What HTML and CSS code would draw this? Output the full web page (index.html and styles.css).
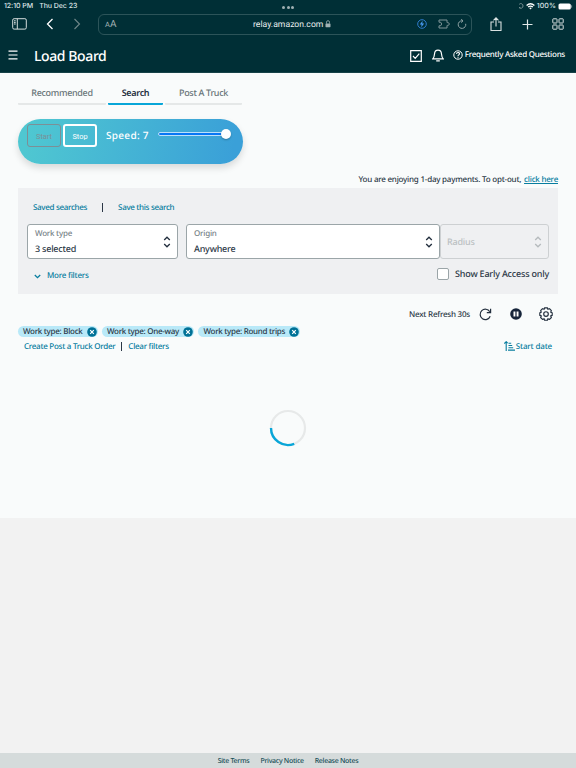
FILE: index.html
```html
<!DOCTYPE html>
<html lang="en">
<head>
<meta charset="utf-8">
<title>Load Board</title>
<link rel="stylesheet" href="styles.css">
</head>
<body>
<header class="top">
  <div class="status">
    <span class="time">12:10 PM</span><span>Thu Dec 23</span>
    <span class="dots"><i></i><i></i><i></i></span>
    <svg class="orient" width="6" height="6" viewBox="0 0 6 6" fill="none" stroke="#8fa3a6" stroke-width=".8"><path d="M1.2 1.3A2.2 2.2 0 0 1 5 3a2.2 2.2 0 0 1-3.7 1.7M1 4.7h1.5"/></svg>
    <svg class="wifi" width="9" height="7" viewBox="0 0 9 7" fill="none" stroke="#fff" stroke-width="1.3"><path d="M.6 2.5Q4.5-.9 8.4 2.5M2.1 4.1q2.4-2 4.8 0"/><path d="M3.2 5 4.5 6.5 5.8 5Q4.5 4.2 3.2 5Z" fill="#fff" stroke="none"/></svg>
    <span class="pct">100%</span>
    <svg width="15" height="7" viewBox="0 0 15 7"><rect x=".5" y=".5" width="12.3" height="6" rx="1.6" fill="#fff"/><path d="M13.6 2.3v2.4" stroke="#a5b5b7" stroke-width=".8"/></svg>
  </div>
  <div class="browser">
    <svg class="side" width="15" height="12" viewBox="0 0 15 12" fill="none" stroke="#d5dddd" stroke-width="1"><rect x=".7" y=".7" width="13.6" height="10.4" rx="1.4"/><path d="M5.3.7v10.4M2 2.8h1.7M2 4.4h1.7M2 6h1.7"/></svg>
    <svg class="back" width="8" height="12" viewBox="0 0 8 12" fill="none" stroke="#fff" stroke-width="1.3"><path d="M6.5 1 1.5 6l5 5"/></svg>
    <svg class="fwd" width="8" height="12" viewBox="0 0 8 12" fill="none" stroke="#6f8789" stroke-width="1.1"><path d="m1.5 1 5 5-5 5"/></svg>
    <div class="address">
      <span class="aa"><small>A</small>A</span>
      <span class="url">relay.amazon.com</span>
      <svg class="lock" width="6" height="8" viewBox="0 0 6 8"><rect x=".5" y="3.4" width="5" height="3.8" rx=".6" fill="#a2b2b4"/><path d="M1.5 3.6V2.2a1.5 1.5 0 0 1 3 0v1.4" fill="none" stroke="#a2b2b4" stroke-width=".8"/></svg>
      <svg class="bolt" width="10" height="10" viewBox="0 0 10 10"><circle cx="5" cy="5" r="4.3" fill="none" stroke="#3484dc" stroke-width=".9"/><path d="M5.6 1.8 2.8 5.4h1.8L4.2 8.2 7.2 4.5H5.3Z" fill="#4a9cf5"/></svg>
      <svg class="puzzle" width="12" height="10" viewBox="0 0 12 10" fill="none" stroke="#7f9597" stroke-width="1" stroke-linejoin="round"><path d="M1 3.200V1h8v2.500c.8.300 2.300 0 2.300 1.500S9.800 6.200 9 6.500V9H1V6.800h1.200c1.800 0 1.800-3.600 0-3.600Z"/></svg>
      <svg class="reload" width="10" height="10" viewBox="0 0 10 10" fill="none" stroke="#8fa3a5" stroke-width="1"><path d="M8.700 4.800A3.800 3.800 0 1 1 5 1.800h1M4.200.2 6 1.800 4.200 3.600"/></svg>
    </div>
    <svg class="share" width="12" height="15" viewBox="0 0 12 15" fill="none" stroke="#d9e1e1" stroke-width="1.1"><path d="M4 5H1v8.500h10V5H8M6 9.500V1M3.500 3.400 6 .9l2.500 2.500"/></svg>
    <svg class="plus" width="11" height="11" viewBox="0 0 11 11" stroke="#e2e8e8" stroke-width="1.200"><path d="M5.500.5v10M.5 5.500h10"/></svg>
    <svg class="tiles" width="12" height="12" viewBox="0 0 12 12" fill="none" stroke="#d9e1e1" stroke-width="1"><rect x=".8" y=".8" width="4.200" height="4.200" rx=".5"/><rect x="7" y=".8" width="4.200" height="4.200" rx=".5"/><rect x=".8" y="7" width="4.200" height="4.200" rx=".5"/><rect x="7" y="7" width="4.200" height="4.200" rx=".5"/></svg>
  </div>
  <div class="appbar">
    <svg width="10" height="10" viewBox="0 0 10 10" stroke="#fff" stroke-width="1.200"><path d="M.5 1.200h9M.5 5h9M.5 8.800h9"/></svg>
    <h1>Load Board</h1>
    <svg class="task" width="12" height="12" viewBox="0 0 12 12" fill="none" stroke="#fff" stroke-width="1.200"><path d="M.7.7h10.600v10.600H.7ZM3 6l2.200 2.300L9.300 3.700"/></svg>
    <svg class="bell" width="12" height="13" viewBox="0 0 12 13" fill="none" stroke="#fff" stroke-width="1.200"><path d="M.7 9.900c1.500-1.100 1.600-2.300 1.800-4.900C2.700 2.300 4 1.200 6 1.200S9.300 2.300 9.500 5c.2 2.600.3 3.800 1.800 4.900ZM4.200 11.900h3.600"/></svg>
    <svg class="help" width="10" height="10" viewBox="0 0 10 10" fill="none" stroke="#fff" stroke-width="1"><circle cx="5" cy="5" r="4.200"/><path d="M3.500 3.900C3.600 1.900 6.500 2 6.500 3.800 6.500 4.900 5 4.800 5 6M5 6.800v1" stroke-width="1.100"/></svg>
    <span class="faq">Frequently Asked Questions</span>
  </div>
</header>
<main>
  <nav class="tabs"><a>Recommended</a><a class="on">Search</a><a>Post A Truck</a></nav>
  <section class="pill">
    <button class="start" disabled>Start</button><button>Stop</button>
    <span class="speed">Speed: 7</span>
    <div class="track"><i></i></div>
  </section>
  <p class="notice">You are enjoying 1-day payments. To opt-out, <a>click here</a></p>
  <section class="panel">
    <div class="saved"><a>Saved searches</a><i class="bar"></i><a>Save this search</a></div>
    <div class="fields">
      <div class="field"><div><label>Work type</label><b>3 selected</b></div>
        <svg width="8" height="12" viewBox="0 0 8 12"><path d="m1.200 4 2.800-2.800L6.800 4M1.200 8 4 10.800 6.800 8"/></svg></div>
      <div class="field origin"><div><label>Origin</label><b>Anywhere</b></div>
        <svg width="8" height="12" viewBox="0 0 8 12"><path d="m1.200 4 2.800-2.800L6.800 4M1.200 8 4 10.800 6.800 8"/></svg></div>
      <div class="field radius"><b>Radius</b>
        <svg width="8" height="12" viewBox="0 0 8 12"><path d="m1.200 4 2.800-2.800L6.800 4M1.200 8 4 10.800 6.800 8"/></svg></div>
    </div>
    <div class="more">
      <svg width="7" height="5" viewBox="0 0 7 5" fill="none" stroke="#077d9f" stroke-width="1.300"><path d="m.8 1 2.700 2.600L6.200 1"/></svg>
      <a>More filters</a><i class="check"></i><span class="early">Show Early Access only</span>
    </div>
  </section>
  <div class="refresh">
    <span>Next Refresh 30s</span>
    <svg class="r1" width="13" height="13" viewBox="0 0 13 13" fill="none" stroke="#232f3e" stroke-width="1.200"><path d="M11.200 8.300A5.200 5.200 0 1 1 10.800 3.700M11.600.8v3.800H7.800"/></svg>
    <svg class="r2" width="12" height="12" viewBox="0 0 12 12"><circle cx="6" cy="6" r="5.800" fill="#16243a"/><path d="M3.500 3.500h1.900v5H3.500ZM6.600 3.500h1.900v5H6.600Z" fill="#fff"/></svg>
    <svg class="r3" width="14" height="14" viewBox="0 0 14 14" fill="none" stroke="#232f3e" stroke-width="1.150" stroke-linejoin="round"><path d="M5.600.8h2.800l.5 1.500 1.600-.6 1.900 1.900-.7 1.600 1.500.5v2.700l-1.500.5.7 1.600-1.900 1.900-1.600-.7-.5 1.500H5.600l-.5-1.500-1.600.7-1.900-1.900.7-1.600-1.500-.5V5.700l1.500-.5-.7-1.600 1.900-1.900 1.600.6Z"/><circle cx="7" cy="7" r="2.300"/></svg>
  </div>
  <div class="chips">
    <span>Work type: Block<svg width="10" height="10" viewBox="0 0 10 10"><circle cx="5" cy="5" r="4.800" fill="#007196"/><path d="m3.200 3.200 3.600 3.600m0-3.600L3.200 6.800" stroke="#fff" stroke-width="1.200"/></svg></span>
    <span>Work type: One-way<svg width="10" height="10" viewBox="0 0 10 10"><circle cx="5" cy="5" r="4.800" fill="#007196"/><path d="m3.200 3.200 3.600 3.600m0-3.600L3.200 6.800" stroke="#fff" stroke-width="1.200"/></svg></span>
    <span>Work type: Round trips<svg width="10" height="10" viewBox="0 0 10 10"><circle cx="5" cy="5" r="4.800" fill="#007196"/><path d="m3.200 3.200 3.600 3.600m0-3.600L3.200 6.800" stroke="#fff" stroke-width="1.200"/></svg></span>
  </div>
  <div class="actions"><a>Create Post a Truck Order</a><i class="bar"></i><a>Clear filters</a>
    <svg width="11" height="10" viewBox="0 0 11 10" fill="none" stroke="#077d9f" stroke-width="1.100"><path d="M2.200 10V.9M.3 2.600 2.200.7l1.500 1.500M4.500 2.200h2.700M4.500 4.500h3.700M4.500 6.800h4.700M4 9.100h7"/></svg>
    <a class="sort">Start date</a></div>
  <svg class="spinner" width="38" height="38" viewBox="0 0 38 38" fill="none"><circle cx="19" cy="19" r="17" stroke="#e7e9e9" stroke-width="2.200"/><path d="M2 19A17 17 0 0 0 25.200 34.800" stroke="#08a6d8" stroke-width="2.400"/></svg>
</main>
<footer><a>Site Terms</a><a>Privacy Notice</a><a>Release Notes</a></footer>
</body>
</html>
```
FILE: styles.css
```css
* { box-sizing: border-box; }
body {
  margin: 0; height: 768px; display: flex; flex-direction: column; overflow: hidden;
  background: #f2f2f2; color: #2b3746;
  font: 500 8px/12px "Noto Sans", "Open Sans", sans-serif;
  letter-spacing: -.22px; white-space: nowrap; text-rendering: geometricPrecision;
}
svg { display: block; flex: none; }
a { color: #077d9f; }

.top { height: 73px; flex: none; background: #002f36; border-bottom: 1px solid #174248; color: #fff; }
.status {
  position: relative; display: flex; align-items: center; height: 12px; padding: 0 3px 0 4px;
  font: 500 7px/12px Inter, sans-serif; letter-spacing: -.05px; color: #dfe6e7;
}
.time { margin-right: 6px; }
.dots { position: absolute; left: 282px; top: 6px; display: flex; gap: 1.700px; }
.dots i { width: 3px; height: 3px; border-radius: 50%; background: #9fb0b2; }
.orient { margin-left: auto; margin-right: 2px; }
.wifi { margin-right: 2px; }
.pct { margin-right: 2px; letter-spacing: .1px; }
.browser { display: flex; align-items: center; height: 24px; padding: 0 12px; }
.back { margin-left: 19px; }
.fwd { margin-left: 19px; }
.address {
  display: flex; align-items: center; width: 374px; height: 21px; margin-left: 17px; padding-left: 6px;
  border: 1px solid #2c5459; border-radius: 6px; font: 8.600px/18px Roboto, sans-serif; letter-spacing: 0;
}
.aa { width: 148px; padding-top: 1px; font-size: 10px; color: #a3b3b5; }
.aa small { font-size: 7.500px; }
.url { width: 70px; padding-top: 1px; color: #e8eeee; letter-spacing: .03px; }
.lock { margin-left: 2px; }
.bolt { margin-left: 86px; }
.puzzle { margin-left: 11px; }
.reload { margin-left: 7px; }
.share { margin-left: 18px; }
.plus { margin-left: 20px; }
.tiles { margin-left: 19px; }
.appbar { display: flex; align-items: center; height: 38px; padding: 0 11px 0 8px; }
h1 { margin: 3px 0 0 16px; font: 500 14px/20px "Noto Sans", sans-serif; letter-spacing: -.4px; }
.task { margin: 1px 0 0 auto; }
.bell { margin: 1px 0 0 10px; }
.help { margin-left: 9px; }
.faq { margin-left: 2px; letter-spacing: -.27px; }

main { height: 445px; flex: none; padding: 0 18px; background: #f9fbfb; }
.tabs { display: grid; grid-template-columns: 88px 55px 77px; column-gap: 2px; padding-top: 10px; }
.tabs a {
  height: 22px; border-bottom: 2px solid #e5e8e8; border-radius: 1px;
  text-align: center; font-size: 9px; line-height: 19px; letter-spacing: -.33px; color: #687478;
}
.tabs .on { border-color: #08a6d8; color: #232f3e; font-weight: 600; }
.pill {
  display: flex; width: 225px; height: 45px; margin-top: 14px; padding: 5px 9px; border-radius: 23px;
  background: linear-gradient(100deg, #4fc7d1 5%, #3aa0d8 95%); box-shadow: 0 4px 7px #0002;
}
button {
  width: 34px; height: 23px; margin: 0; padding: 1px 0 0; border: 2px solid #fff; border-radius: 3px;
  background: none; color: #fff; font: 7.400px Roboto, sans-serif; letter-spacing: 0;
}
button.start { margin-right: 2px; border: 1px solid #7d8f96; color: #7d8f96; }
.speed { width: 43px; margin: 3px 9px 0 9px; color: #fff; font-size: 10px; line-height: 17px; letter-spacing: .3px; }
.track { width: 70px; height: 4px; margin-top: 8px; border: 1px solid #bce0fb; border-radius: 2px; background: #0877f5; }
.track i { display: block; width: 10px; height: 10px; margin: -4px -4px 0 auto; border-radius: 50%; background: #fff; box-shadow: 0 1px 2px #0004; }
.notice { margin: 9px 0 3px; text-align: right; line-height: 13px; height: 12px; }
.notice a { margin-left: 1px; text-decoration: underline; }

.panel { height: 106px; padding: 13px 9px 0; background: #eff0f2; }
.saved { display: flex; align-items: center; height: 13px; padding-left: 6px; letter-spacing: -.32px; }
.bar { width: 1px; height: 9px; background: #2b3746; }
.saved .bar { margin: 0 15px; }
.fields { display: grid; grid-template-columns: 151px 8px 254px 109px; margin-top: 10px; }
.origin { grid-column: 3; }
.field {
  display: flex; align-items: center; justify-content: space-between; height: 35px; padding: 0 6px 0 7px;
  border: 1px solid #9ba5a8; border-radius: 3px; background: #fff;
}
.field label { display: block; color: #778388; line-height: 12px; }
.field b { display: block; margin-top: 2px; font-size: 9px; font-weight: 500; line-height: 13px; }
.field svg { fill: none; stroke: #232f3e; stroke-width: 1.300px; }
.radius { padding-left: 6px; background: #eff0f2; border-color: #cdd0d2; }
.radius b { margin: 0; color: #bbc0c2; }
.radius svg { stroke: #b5babd; }
.more { display: flex; align-items: center; height: 12px; margin-top: 9px; padding-left: 7px; }
.more a { margin: 4px 0 0 6px; }
.more > svg { margin-top: 4px; }
.check { width: 12px; height: 12px; margin-left: auto; border: 1px solid #9ba5a8; border-radius: 2px; background: #fff; }
.early { margin-left: 6px; font-size: 9px; letter-spacing: -.2px; }

.refresh { display: flex; align-items: center; justify-content: flex-end; height: 14px; margin-top: 13px; padding-right: 5px; }
.refresh span { padding-top: 1px; }
.r1 { margin-left: 9px; }
.r2 { margin-left: 18px; }
.r3 { margin-left: 17px; }
.chips { display: flex; gap: 4.500px; margin-top: 5px; }
.chips span { display: flex; align-items: center; gap: 4px; height: 11px; padding: 0 1px 0 5px; border-radius: 6px; background: #b9e9f8; letter-spacing: -.28px; }
.actions { display: flex; align-items: center; height: 12px; margin-top: 3px; padding: 0 6px; }
.actions a { padding-top: 1px; letter-spacing: -.27px; }
.actions .bar { margin: 0 6px; }
.actions svg { margin-left: auto; }
.actions .sort { margin-left: 1px; letter-spacing: -.15px; }
.spinner { margin: 57px auto 0; }

footer { display: flex; justify-content: center; gap: 11px; height: 15px; margin-top: auto; background: #d5dbdb; font-size: 7px; line-height: 17px; letter-spacing: -.3px; }
footer a { color: #174e57; }
```
